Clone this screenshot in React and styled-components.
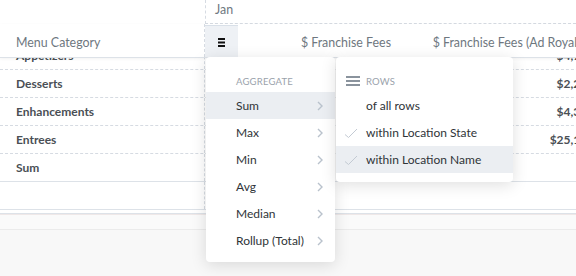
import styled, { createGlobalStyle } from 'styled-components';

const GlobalStyle = createGlobalStyle`
  body {
    margin: 0;
    font-family: Lato, "Open Sans", sans-serif;
    background: #fff;
  }
`;

const SPage = styled.div`
  position: relative;
  width: 576px;
  height: 276px;
  overflow: hidden;
  background: #f8f8f8;
`;

const STable = styled.div`
  background: #fff;
  border-bottom: 1px solid #dde2e8;
  padding-bottom: 3px;
`;

const SHeadTop = styled.div`
  display: grid;
  grid-template-columns: 205px 1fr;
  height: 24px;
`;

const SHeadCell = styled.div`
  border-left: 1px dashed #d6dbe2;
  border-bottom: 1px dashed #d6dbe2;
  padding: 3px 0 0 9px;
  font-size: 12.4px;
  line-height: 14px;
  color: #6e7780;
`;

const SHeadBottom = styled.div`
  display: grid;
  grid-template-columns: 205px 33px 162px 200px;
  width: 600px;
  height: 33px;
  border-bottom: 1px solid #dde2e8;
  box-shadow: 0 1px 3px rgba(0, 0, 0, 0.05);
  position: relative;
  z-index: 1;
  background: #fff;
`;

const SColTitle = styled.div`
  display: flex;
  align-items: center;
  justify-content: ${p => (p.$right ? 'flex-end' : 'flex-start')};
  padding: 3px 9px 0 ${p => (p.$right ? '0' : '16px')};
  font-size: 12.4px;
  color: #6e7780;
  white-space: nowrap;
  border-right: ${p => (p.$divider ? '1px dashed #d6dbe2' : 'none')};
`;

const SIconCell = styled.div`
  display: flex;
  align-items: center;
  justify-content: center;
  padding-top: 2px;
  background: #eef1f5;
  border-top: 1px solid #d9e0e8;
  margin-top: 1px;
`;

const SBody = styled.div`
  height: 152px;
  overflow: hidden;
`;

const SRows = styled.div`
  margin-top: -16px;
  width: 619px;
`;

const SRow = styled.div`
  display: grid;
  grid-template-columns: 205px 1fr 110px;
  height: 28px;
  box-sizing: border-box;
  border-bottom: 1px ${p => (p.$total ? 'solid #dde2e8' : 'dashed #d6dbe2')};
`;

const SLabel = styled.div`
  display: flex;
  align-items: center;
  padding-left: 16px;
  font-size: 12px;
  font-weight: 700;
  color: #4a4f55;
  border-right: 1px dashed #d6dbe2;
`;

const SValue = styled.div`
  display: flex;
  align-items: center;
  justify-content: flex-end;
  padding-right: 8px;
  font-size: 12px;
  font-weight: 700;
  color: #4a4f55;
  white-space: nowrap;
`;

const SStrip = styled.div`
  height: 14px;
  background: #fafafa;
  border-top: 1px solid #efe8e8;
  border-bottom: 1px solid #ebebeb;
`;

const SFooter = styled.div`
  padding: 40px 0 0 29px;
`;

const STitle = styled.h1`
  margin: 0;
  font-size: 24px;
  line-height: 30px;
  font-weight: 900;
  color: #000;
`;

const SMenu = styled.div`
  position: absolute;
  left: ${p => p.$left}px;
  top: 57px;
  width: ${p => p.$width}px;
  padding: 16px 0 ${p => p.$bottom}px;
  background: #fff;
  border-radius: 4px;
  box-shadow: 0 3px 16px rgba(0, 0, 0, 0.13);
  z-index: 2;
`;

const SSection = styled.div`
  display: flex;
  align-items: center;
  height: 16px;
  margin-bottom: 3px;
  padding-left: 30px;
  position: relative;
  font-size: 9.5px;
  letter-spacing: 0.2px;
  text-transform: uppercase;
  color: #9aa2ab;

  > svg {
    position: absolute;
    left: 10px;
  }
`;

const SItem = styled.div`
  display: flex;
  align-items: center;
  justify-content: space-between;
  height: 27px;
  padding: 0 12px 0 30px;
  position: relative;
  font-size: 12px;
  color: #2f3438;
  background: ${p => (p.$active ? '#ebeef2' : 'transparent')};

  > svg.check {
    position: absolute;
    left: 8px;
  }
`;

const HamburgerIcon = () => (
  <svg width="7" height="9" viewBox="0 0 7 9">
    <rect x="0" y="0" width="7" height="2" fill="#111" />
    <rect x="0" y="3.5" width="7" height="2" fill="#111" />
    <rect x="0" y="7" width="7" height="2" fill="#111" />
  </svg>
);

const RowsIcon = () => (
  <svg width="14" height="10" viewBox="0 0 14 10">
    <rect x="0" y="0" width="14" height="2" fill="#8a939d" />
    <rect x="0" y="4" width="14" height="2" fill="#8a939d" />
    <rect x="0" y="8" width="14" height="2" fill="#8a939d" />
  </svg>
);

const Chevron = () => (
  <svg width="6" height="10" viewBox="0 0 6 10">
    <path d="M1 1l4 4-4 4" fill="none" stroke="#b9c2cc" strokeWidth="1.4" />
  </svg>
);

const Check = () => (
  <svg className="check" width="14" height="10" viewBox="0 0 14 10">
    <path d="M1 6.5l3.5 3L13 1" fill="none" stroke="#c3cad3" strokeWidth="1" />
  </svg>
);

const rows = [
  { name: 'Appetizers', value: '$4,762.50' },
  { name: 'Desserts', value: '$2,245.00' },
  { name: 'Enhancements', value: '$4,350.75' },
  { name: 'Entrees', value: '$25,180.25' },
];

const aggregates = ['Sum', 'Max', 'Min', 'Avg', 'Median', 'Rollup (Total)'];

const App = () => {
  return (
    <SPage>
      <GlobalStyle />
      <STable>
        <SHeadTop>
          <div />
          <SHeadCell>Jan</SHeadCell>
        </SHeadTop>
        <SHeadBottom>
          <SColTitle $divider>Menu Category</SColTitle>
          <SIconCell>
            <HamburgerIcon />
          </SIconCell>
          <SColTitle $right>$ Franchise Fees</SColTitle>
          <SColTitle $right>$ Franchise Fees (Ad Royalty)</SColTitle>
        </SHeadBottom>
        <SBody>
          <SRows>
            {rows.map(r => (
              <SRow key={r.name}>
                <SLabel>{r.name}</SLabel>
                <div />
                <SValue>{r.value}</SValue>
              </SRow>
            ))}
            <SRow $total>
              <SLabel>Sum</SLabel>
              <div />
              <div />
            </SRow>
            <SRow $total>
              <SLabel />
              <div />
              <div />
            </SRow>
          </SRows>
        </SBody>
      </STable>
      <SStrip />
      <SFooter>
        <STitle>fees summary</STitle>
      </SFooter>

      <SMenu $left={206} $width={129} $bottom={8}>
        <SSection>Aggregate</SSection>
        {aggregates.map((a, i) => (
          <SItem key={a} $active={i === 0}>
            <span>{a}</span>
            <Chevron />
          </SItem>
        ))}
      </SMenu>

      <SMenu $left={336} $width={177} $bottom={9}>
        <SSection>
          <RowsIcon />
          Rows
        </SSection>
        <SItem>of all rows</SItem>
        <SItem>
          <Check />
          within Location State
        </SItem>
        <SItem $active>
          <Check />
          within Location Name
        </SItem>
      </SMenu>
    </SPage>
  );
};

export default App;
